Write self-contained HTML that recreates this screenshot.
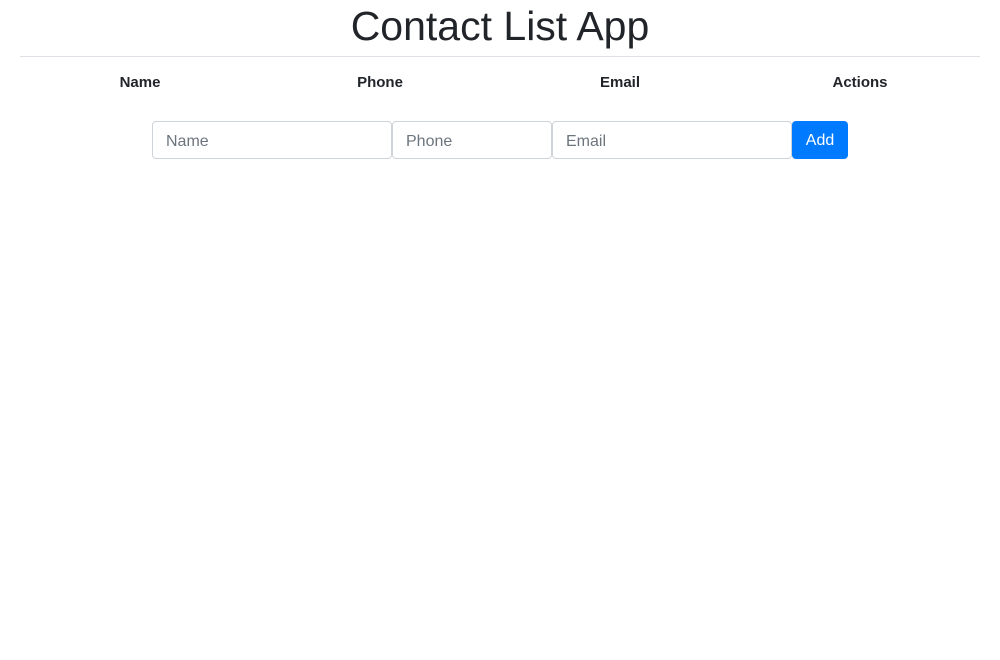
<!DOCTYPE html>
<html><head><style>
body{margin:0;background:#fff;font-family:"Liberation Sans",sans-serif;color:#212529;}
h1{margin:0;position:absolute;top:2px;left:0;width:1000px;text-align:center;font-size:41px;font-weight:500;line-height:48px;}
hr{position:absolute;top:56px;left:20px;width:960px;margin:0;border:0;border-top:1px solid #dee2e6;}
.th{position:absolute;top:73px;width:240px;text-align:center;font-weight:bold;font-size:15px;line-height:20px;}
.in{position:absolute;top:121px;height:38px;box-sizing:border-box;border:1px solid #ced4da;border-radius:4px;font-size:16px;color:#6c757d;padding:0 13px;line-height:39px;}
.btn{position:absolute;top:121px;left:792px;width:56px;height:38px;background:#007bff;color:#fff;border-radius:4px;text-align:center;line-height:39px;font-size:16px;}
</style></head><body>
<h1>Contact List App</h1>
<hr>
<div class="th" style="left:20px">Name</div>
<div class="th" style="left:260px">Phone</div>
<div class="th" style="left:500px">Email</div>
<div class="th" style="left:740px">Actions</div>
<div class="in" style="left:152px;width:240px">Name</div>
<div class="in" style="left:392px;width:160px">Phone</div>
<div class="in" style="left:552px;width:240px">Email</div>
<div class="btn">Add</div>
</body></html>
